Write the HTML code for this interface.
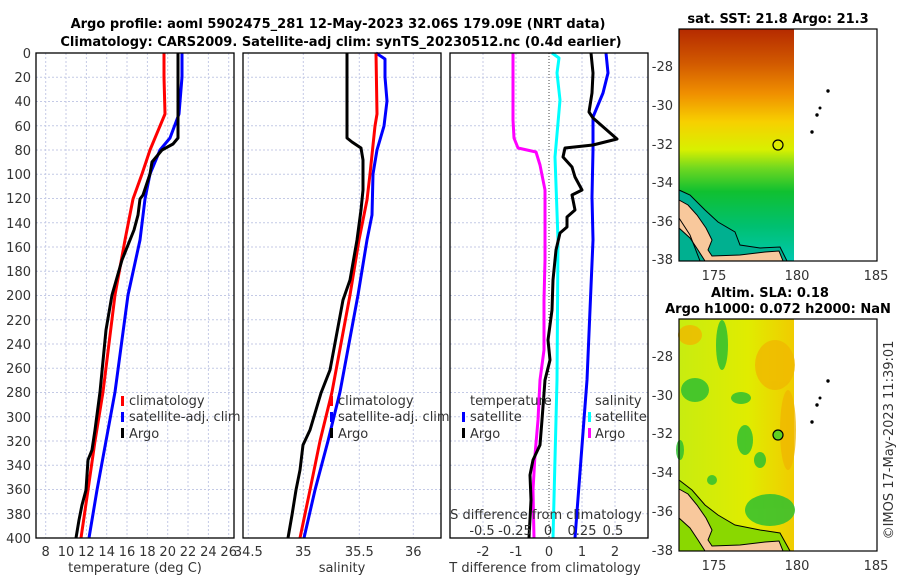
<!DOCTYPE html>
<html><head><meta charset="utf-8"><style>
html,body{margin:0;padding:0;background:#fff;}
svg{display:block;font-family:"DejaVu Sans","Liberation Sans",sans-serif;}
.t{font-size:13px;fill:#333;}
.b{font-size:13px;font-weight:bold;fill:#000;}
.g{stroke:#c4cae6;stroke-width:1;stroke-dasharray:2,2;}
</style></head><body>
<svg width="900" height="580" viewBox="0 0 900 580">
<text class="b" x="338" y="28" text-anchor="middle">Argo profile: aoml 5902475_281 12-May-2023 32.06S 179.09E (NRT data)</text>
<text class="b" x="341" y="46" text-anchor="middle">Climatology: CARS2009. Satellite-adj clim: synTS_20230512.nc (0.4d earlier)</text>

<g class="g">
<path d="M36 77.2H234M36 101.5H234M36 125.8H234M36 150H234M36 174.2H234M36 198.5H234M36 222.8H234M36 247H234M36 271.2H234M36 295.5H234M36 319.8H234M36 344H234M36 368.2H234M36 392.5H234M36 416.8H234M36 441H234M36 465.2H234M36 489.5H234M36 513.8H234"/>
<path d="M45.7 53V538M66 53V538M86.4 53V538M106.7 53V538M127 53V538M147.4 53V538M167.7 53V538M188 53V538M208.4 53V538M228.7 53V538"/>
<path d="M243 77.2H441M243 101.5H441M243 125.8H441M243 150H441M243 174.2H441M243 198.5H441M243 222.8H441M243 247H441M243 271.2H441M243 295.5H441M243 319.8H441M243 344H441M243 368.2H441M243 392.5H441M243 416.8H441M243 441H441M243 465.2H441M243 489.5H441M243 513.8H441"/>
<path d="M248.3 53V538M303.3 53V538M359.3 53V538M413.3 53V538"/>
<path d="M450 77.2H648M450 101.5H648M450 125.8H648M450 150H648M450 174.2H648M450 198.5H648M450 222.8H648M450 247H648M450 271.2H648M450 295.5H648M450 319.8H648M450 344H648M450 368.2H648M450 392.5H648M450 416.8H648M450 441H648M450 465.2H648M450 489.5H648M450 513.8H648"/>
<path d="M483 53V538M516 53V538M582 53V538M615 53V538"/>
</g>
<line x1="549" y1="53" x2="549" y2="538" stroke="#444" stroke-width="1" stroke-dasharray="1,2"/>

<g fill="none" stroke-width="3" stroke-linejoin="round">
<polyline stroke="#00f" points="182,53 182,77 179,114 170,138 160,150 150,174 145,199 140,240 128,295 115,392 106,441 97,490 89,538"/>
<polyline stroke="#f00" points="164,53 164,77 165,114 160,126 150,150 142,174 133,199 125,240 115,295 103,392 95,441 88,490 81,538"/>
<polyline stroke="#000" points="178,53 178,138 173,144 162,150 152,162 150,174 146,186 143,195 140,199 138,215 134,230 122,260 112,295 106,330 100,392 95,430 92,450 88,460 86,490 82,505 79,520 76,538"/>
<polyline stroke="#00f" points="376,53 385,59 385,77 387,101 384,126 377,150 373,174 372,215 367,240 358,295 340,392 328,441 315,490 304,538"/>
<polyline stroke="#f00" points="376,53 377,114 375,126 370,174 367,200 359,240 350,295 332,392 320,441 310,490 300,538"/>
<polyline stroke="#000" points="347,53 347,138 352,142 361,148 363,160 363,190 361,210 357,240 350,280 343,300 330,370 321,393 310,430 303,445 300,470 296,490 292,515 288,538"/>
<polyline stroke="#0ff" points="552,53 559,58 557,73 560,100 555,157 558,240 557,380 553,538"/>
<polyline stroke="#00f" points="606,53 608,73 603,93 593,117 593,150 592,197 593,240 587,380 575,538"/>
<polyline stroke="#f0f" points="513,53 513,120 514,138 518,148 536,152 540,165 545,190 545,260 544,300 544,350 540,380 538,420 535,455 533,490 534,538"/>
<polyline stroke="#000" points="591,53 593,73 592,93 589,112 593,118 617,139 593,145 565,148 563,157 572,167 575,177 582,190 572,195 575,210 567,217 567,227 560,233 556,250 553,280 552,310 548,340 550,360 545,380 542,420 540,445 533,460 530,475 531,500 529,538"/>
</g>

<g fill="none" stroke="#000" stroke-width="1.3">
<rect x="36" y="53" width="198" height="485"/>
<rect x="243" y="53" width="198" height="485"/>
<rect x="450" y="53" width="198" height="485"/>
</g>
<g class="t" text-anchor="end">
<text x="31" y="58">0</text><text x="31" y="82">20</text><text x="31" y="106">40</text><text x="31" y="131">60</text><text x="31" y="155">80</text><text x="31" y="179">100</text><text x="31" y="203">120</text><text x="31" y="228">140</text><text x="31" y="252">160</text><text x="31" y="276">180</text><text x="31" y="300">200</text><text x="31" y="325">220</text><text x="31" y="349">240</text><text x="31" y="373">260</text><text x="31" y="397">280</text><text x="31" y="422">300</text><text x="31" y="446">320</text><text x="31" y="470">340</text><text x="31" y="494">360</text><text x="31" y="519">380</text><text x="31" y="543">400</text>
</g>
<g class="t" text-anchor="middle">
<text x="45.7" y="556">8</text><text x="66" y="556">10</text><text x="86.4" y="556">12</text><text x="106.7" y="556">14</text><text x="127" y="556">16</text><text x="147.4" y="556">18</text><text x="167.7" y="556">20</text><text x="188" y="556">22</text><text x="208.4" y="556">24</text><text x="228.7" y="556">26</text>
<text x="248.3" y="556">34.5</text><text x="303.3" y="556">35</text><text x="359.3" y="556">35.5</text><text x="413.3" y="556">36</text>
<text x="483" y="556">-2</text><text x="516" y="556">-1</text><text x="549" y="556">0</text><text x="582" y="556">1</text><text x="615" y="556">2</text>
<text x="135" y="572">temperature (deg C)</text>
<text x="342" y="572">salinity</text>
<text x="545" y="572">T difference from climatology</text>
<text x="546" y="519">S difference from climatology</text>
<text x="482" y="535">-0.5</text><text x="515" y="535">-0.25</text><text x="548" y="535">0</text><text x="582" y="535">0.25</text><text x="613" y="535">0.5</text>
</g>
<g class="t">
<rect x="121" y="396" width="3" height="10" fill="#f00"/><text x="129" y="405">climatology</text>
<rect x="121" y="412" width="3" height="10" fill="#00f"/><text x="129" y="421">satellite-adj. clim</text>
<rect x="121" y="428" width="3" height="10" fill="#000"/><text x="129" y="438">Argo</text>
<rect x="330" y="396" width="3" height="10" fill="#f00"/><text x="338" y="405">climatology</text>
<rect x="330" y="412" width="3" height="10" fill="#00f"/><text x="338" y="421">satellite-adj. clim</text>
<rect x="330" y="428" width="3" height="10" fill="#000"/><text x="338" y="438">Argo</text>
<text x="470" y="405">temperature</text>
<rect x="462" y="412" width="3" height="10" fill="#00f"/><text x="470" y="421">satellite</text>
<rect x="462" y="428" width="3" height="10" fill="#000"/><text x="470" y="438">Argo</text>
<text x="595" y="405">salinity</text>
<rect x="588" y="412" width="3" height="10" fill="#0ff"/><text x="595" y="421">satellite</text>
<rect x="588" y="428" width="3" height="10" fill="#f0f"/><text x="595" y="438">Argo</text>
</g>

<text class="b" x="778" y="23" text-anchor="middle">sat. SST: 21.8 Argo: 21.3</text>
<defs>
<linearGradient id="sst" x1="0" y1="0" x2="0" y2="1">
<stop offset="0" stop-color="#b52a00"/><stop offset="0.15" stop-color="#d25a00"/><stop offset="0.28" stop-color="#f09000"/><stop offset="0.4" stop-color="#f7d000"/><stop offset="0.52" stop-color="#d8f000"/><stop offset="0.6" stop-color="#70d820"/><stop offset="0.7" stop-color="#10c030"/><stop offset="0.85" stop-color="#00c070"/><stop offset="1" stop-color="#00c8b0"/>
</linearGradient>
<linearGradient id="sla" x1="0" y1="0" x2="1" y2="0">
<stop offset="0" stop-color="#c8ec10"/><stop offset="0.6" stop-color="#e0ec00"/><stop offset="1" stop-color="#f0cc00"/>
</linearGradient>
</defs>
<rect x="679" y="29" width="115" height="232" fill="url(#sst)"/>
<path d="M679 190 L690 195 L705 210 L718 222 L735 232 L740 245 L760 248 L780 247 L787 261 L679 261Z" fill="#00b090" stroke="#000" stroke-width="1"/>
<path d="M679 200 L688 205 L697 215 L706 228 L712 240 L708 250 L712 256 L740 255 L765 252 L779 251 L783 261 L705 261 L698 250 L690 238 L679 228Z" fill="#f8c89c" stroke="#000" stroke-width="1"/>
<path d="M679 218 L690 235 L700 261" fill="none" stroke="#000" stroke-width="1"/>
<circle cx="778" cy="145" r="5" fill="none" stroke="#000" stroke-width="1.2"/>
<g fill="#000"><circle cx="828" cy="91" r="1.7"/><circle cx="820" cy="108" r="1.5"/><circle cx="817" cy="115" r="1.7"/><circle cx="812" cy="132" r="1.7"/></g>
<rect x="679" y="29" width="198" height="232" fill="none" stroke="#000" stroke-width="1.2"/>
<g class="t" text-anchor="end">
<text x="673" y="71">-28</text><text x="673" y="110">-30</text><text x="673" y="149">-32</text><text x="673" y="187">-34</text><text x="673" y="226">-36</text><text x="673" y="264">-38</text>
<text x="673" y="361">-28</text><text x="673" y="400">-30</text><text x="673" y="438">-32</text><text x="673" y="477">-34</text><text x="673" y="516">-36</text><text x="673" y="555">-38</text>
</g>
<g class="t" text-anchor="middle">
<text x="714" y="280">175</text><text x="797" y="280">180</text><text x="876" y="280">185</text>
<text x="714" y="570">175</text><text x="797" y="570">180</text><text x="876" y="570">185</text>
</g>

<text class="b" x="770" y="297" text-anchor="middle">Altim. SLA: 0.18</text>
<text class="b" x="778" y="313" text-anchor="middle">Argo h1000: 0.072 h2000: NaN</text>
<rect x="679" y="319" width="115" height="232" fill="url(#sla)"/>
<g fill="#f0b800" opacity="0.8">
<ellipse cx="775" cy="365" rx="20" ry="25"/><ellipse cx="690" cy="335" rx="12" ry="10"/><ellipse cx="788" cy="430" rx="8" ry="40"/>
</g>
<g fill="#30c030" opacity="0.85">
<ellipse cx="695" cy="390" rx="14" ry="12"/><ellipse cx="722" cy="345" rx="6" ry="25"/><ellipse cx="741" cy="398" rx="10" ry="6"/>
<ellipse cx="745" cy="440" rx="8" ry="15"/><ellipse cx="760" cy="460" rx="6" ry="8"/><ellipse cx="770" cy="510" rx="25" ry="16"/><ellipse cx="680" cy="450" rx="4" ry="10"/><ellipse cx="712" cy="480" rx="5" ry="5"/>
</g>
<path d="M679 480 L692 490 L705 505 L718 515 L735 525 L760 530 L780 533 L790 551 L679 551Z" fill="#8ad800" stroke="#000" stroke-width="1"/>
<path d="M679 489 L688 494 L697 505 L706 518 L712 530 L708 540 L712 546 L740 545 L765 542 L779 541 L783 551 L705 551 L698 540 L690 528 L679 518Z" fill="#f8c89c" stroke="#000" stroke-width="1"/>
<circle cx="778" cy="435" r="5" fill="#60d020" stroke="#000" stroke-width="1.2"/>
<g fill="#000"><circle cx="828" cy="381" r="1.7"/><circle cx="820" cy="398" r="1.5"/><circle cx="817" cy="405" r="1.7"/><circle cx="812" cy="422" r="1.7"/></g>
<rect x="679" y="319" width="198" height="232" fill="none" stroke="#000" stroke-width="1.2"/>
<text class="t" x="893" y="440" text-anchor="middle" transform="rotate(-90 893 440)">©IMOS 17-May-2023 11:39:01</text>
</svg>
</body></html>
